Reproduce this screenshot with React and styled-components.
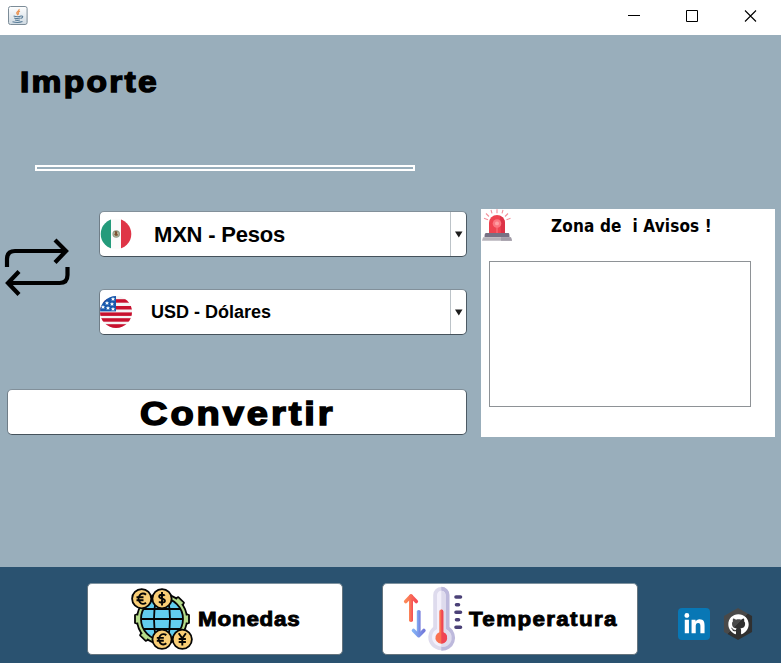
import React from "react";
import styled, { createGlobalStyle } from "styled-components";
import { FaGithub, FaLinkedinIn } from "react-icons/fa";

const GlobalStyle = createGlobalStyle`
  * { box-sizing: border-box; }
  body { margin: 0; overflow: hidden; }
  svg { display: block; flex: none; }
  button { padding: 0; border: 0; font: inherit; color: inherit; text-align: left; }
`;

const Window = styled.div`
  width: 781px;
  height: 663px;
  display: flex;
  flex-direction: column;
  background: #99aebb;
  color: #000;
  font-family: "Liberation Sans", Arial, sans-serif;
`;

const TitleBar = styled.header`
  height: 35px;
  flex: none;
  display: flex;
  justify-content: space-between;
  padding: 6px 24px 0 8px;
  background: #fff;
`;

const WindowControls = styled.div`
  display: flex;
  gap: 46px;
  padding-top: 4px;
`;

const Heavy = styled.span`
  display: block;
  font-weight: 700;
  font-size: ${(p) => p.$size}px;
  letter-spacing: ${(p) => p.$spacing}px;
  line-height: 1;
  white-space: nowrap;
  -webkit-text-stroke: 0.045em #000;
  transform: scaleX(1.12);
  transform-origin: left;
`;

const Amount = styled.section`
  height: 136px;
  flex: none;
  padding: 32px 0 0 20px;
`;

const AmountTitle = styled.h1`
  margin: 0;
  height: 98px;
  display: flex;
  align-items: flex-start;
`;

const AmountField = styled.input`
  display: block;
  width: 380px;
  height: 6px;
  margin-left: 15px;
  padding: 0;
  border: 2px solid #fff;
  background: transparent;
  outline: none;
`;

const Main = styled.main`
  flex: 1;
  display: grid;
  grid-template-columns: 460px 294px;
  column-gap: 14px;
  padding: 38px 6px 0 7px;
`;

const Converter = styled.div`
  padding-top: 2px;
`;

const Currencies = styled.div`
  display: flex;
  height: 178px;
`;

const SwapButton = styled.button`
  width: 92px;
  height: 60px;
  margin-top: 26px;
  background: none;
`;

const SwapIcon = styled.svg`
  margin-left: -3px;
`;

const Selects = styled.div`
  display: flex;
  flex-direction: column;
  gap: 32px;
`;

const Raised = styled.button`
  background: #fff;
  border: 1px solid;
  border-color: #82909a #4c5a64 #45525b #6f7d87;
  border-radius: 5px;
`;

const Select = styled(Raised)`
  width: 368px;
  height: 46px;
  display: flex;
  align-items: center;
`;

const Label = styled.span`
  flex: 1;
  font-size: ${(p) => p.$size}px;
  font-weight: 700;
  padding-top: ${(p) => p.$drop}px;
  padding-left: ${(p) => p.$inset}px;
  letter-spacing: ${(p) => p.$spacing}px;
`;

const Arrow = styled.span`
  width: 16px;
  height: 44px;
  display: flex;
  align-items: center;
  justify-content: center;
  border-left: 1px solid #bcc3c8;
`;

const ConvertButton = styled(Raised)`
  width: 460px;
  height: 46px;
  display: flex;
  align-items: center;
  padding: 2px 0 0 132px;
`;

const Notices = styled.aside`
  height: 228px;
  padding-left: 8px;
  background: #fff;
`;

const NoticesHeader = styled.div`
  height: 52px;
  display: flex;
`;

const SirenIcon = styled.svg`
  margin-left: -8px;
`;

const NoticesTitle = styled.h2`
  margin: 6px 0 0 38px;
  font: 700 17px/22px "DejaVu Sans Condensed", "DejaVu Sans", sans-serif;
  font-stretch: condensed;
  letter-spacing: ${(p) => p.$spacing}px;
  white-space: pre;
`;

const NoticesBox = styled.div`
  width: 262px;
  height: 146px;
  border: 1px solid #8e9296;
`;

const Footer = styled.footer`
  height: 96px;
  flex: none;
  display: flex;
  align-items: flex-start;
  padding: 16px 0 0 87px;
  background: #2a5270;
`;

const ModeButton = styled(Raised)`
  width: 256px;
  height: 72px;
  display: flex;
  align-items: center;
  margin-right: ${(p) => p.$gap}px;
  padding-left: ${(p) => p.$inset}px;
  gap: ${(p) => p.$space}px;
  border-color: #7e929f #65747e #65747e #65747e;
`;

const Social = styled.a`
  width: 32px;
  height: 32px;
  margin-top: 25px;
  display: grid;
  place-items: center;
  color: #fff;
  background: ${(p) => p.$bg};
  border-radius: ${(p) => (p.$hex ? 0 : 4)}px;
  margin-left: ${(p) => (p.$hex ? 12 : 0)}px;
  clip-path: ${(p) => (p.$hex ? "polygon(50% 0, 94% 25%, 94% 75%, 50% 100%, 6% 75%, 6% 25%)" : "none")};
`;

function JavaIcon() {
  return (
    <svg width="20" height="20" viewBox="0 0 20 20" fill="none">
      <defs>
        <linearGradient id="tile" x1="0" y1="0" x2="0" y2="1">
          <stop offset="0" stopColor="#fff" />
          <stop offset="1" stopColor="#cfdae2" />
        </linearGradient>
      </defs>
      <rect x=".5" y=".5" width="18.6" height="18" rx="2" fill="url(#tile)" stroke="#7c8c98" />
      <path d="M10.8 3.2c1.5 1.6-3 2.4-2 4.2l1.2 1.8M12 5.3c-2.2.8-2.2 1.6-1.2 3" stroke="#ea9250" strokeWidth="1.2" />
      <path d="M5.6 10q4 1.3 7.5.1M6.2 12q3.2 1 6 .1M7 14q2.3.7 4.8 0M4.5 15.7q5.2 1.5 10-.1M13 10c2.7-.4 2 1.8-.4 2.4" stroke="#567a96" strokeWidth="1.1" />
    </svg>
  );
}

function MexicoFlag() {
  return (
    <svg width="32" height="32" viewBox="0 0 32 32">
      <clipPath id="mx"><circle cx="16" cy="16" r="15.3" /></clipPath>
      <g clipPath="url(#mx)">
        <rect width="11" height="32" fill="#249b7b" />
        <rect x="11" width="10" height="32" fill="#fbfbfb" />
        <rect x="21" width="11" height="32" fill="#df3547" />
      </g>
      <circle cx="16.2" cy="16" r="3.2" fill="#b9b59c" stroke="#93a08c" strokeWidth="1.2" />
      <path d="M14.6 13l2.8.4-.4 2.2 1.2 1.6-2.4.8-1.6-1.4 1-1.6z" fill="#79502f" />
    </svg>
  );
}

const STARS = [[13, 3], [7, 7], [12, 8], [3, 11], [8, 12], [13, 13]];

function UsaFlag() {
  return (
    <svg width="32" height="32" viewBox="0 0 32 32">
      <clipPath id="us"><circle cx="16" cy="16" r="16" /></clipPath>
      <g clipPath="url(#us)">
        <rect width="32" height="32" fill="#f5f3f4" />
        {[3.2, 10, 16.4, 22.2, 28.2].map((y) => (
          <rect key={y} y={y} width="32" height={y > 27 ? 4 : 3.5} fill="#c8102e" />
        ))}
        <rect width="16" height="15.4" fill="#1858ad" />
        {STARS.map(([x, y]) => (
          <path key={`${x}-${y}`} transform={`translate(${x} ${y})`} fill="#fff"
            d="M0-2l.6 1.3 1.4.1L1 .4l.4 1.5L0 1.1l-1.4.8.4-1.5-1-1 1.4-.1z" />
        ))}
      </g>
    </svg>
  );
}

function Siren() {
  return (
    <SirenIcon width="32" height="34" viewBox="0 0 32 34">
      <path d="M16 .3v4M10 1l1 3.4M5 4.5l3 3M3 9.3l4 1.5M22 1l-1 3.4M27 4.5l-3 3M29.5 9.3l-4 1.5" stroke="#f3909b" strokeWidth="1.1" />
      <path d="M8 25V14a8 8 0 0 1 16 0v11z" fill="#ef4350" />
      <path d="M19 7a8 8 0 0 1 5 7v11h-4z" fill="#dc3347" />
      <circle cx="16" cy="14.5" r="4.3" fill="#fb7680" />
      <circle cx="16" cy="14.5" r="2" fill="#ffa0a3" />
      <path d="M16 16v9" stroke="#fb7680" />
      <path d="M5 24h22.5q1 0 1 4.2H3.5Q3.5 24 5 24z" fill="#777184" />
      <path d="M2 28.2h28l1 3.6H1z" fill="#b7b3bb" />
      <path d="M20 28.2h10l1 3.6H20z" fill="#a29da8" />
    </SirenIcon>
  );
}

const TEETH = [0, 45, 90, 135, 180, 225, 270, 315];

function MoneyGlobe() {
  return (
    <svg width="64" height="64" viewBox="0 0 64 64" stroke="#050505" strokeWidth="1.8">
      <g fill="#b5dc8a" strokeLinejoin="round">
        {TEETH.map((angle) => (
          <path key={angle} d="M56 27l3 1v8l-3 1z" transform={`rotate(${angle} 32 32)`} />
        ))}
        <circle cx="32" cy="32" r="25" />
        {TEETH.map((angle) => (
          <path key={angle} d="M55 28.500h3v7h-3z" stroke="none" transform={`rotate(${angle} 32 32)`} />
        ))}
      </g>
      <circle cx="32" cy="32" r="21" fill="#62cdef" />
      <path fill="none" d="M13 22h38M11 32h42M13 42h38M26 12q-4 20 0 40M38 12q4 20 0 40" />
      <g fill="#f9ce76">
        <circle cx="11.700" cy="11.700" r="9.600" />
        <circle cx="32" cy="11.700" r="9.600" />
        <circle cx="32" cy="52.300" r="9.600" />
        <circle cx="52.300" cy="52.300" r="9.600" />
      </g>
      <g fill="none" strokeWidth="1.900">
        <path d="M16 7.700a4.500 5.200 0 1 0 0 8M6.500 10.300h7M6.500 13.200h7" />
        <path d="M36.300 48.300a4.500 5.200 0 1 0 0 8M26.800 50.900h7M26.800 53.800h7" />
        <path d="M34.700 8.800c-1-1.500-5.500-1.500-5.500.8 0 2.800 5.700 1.500 5.700 4.200 0 2.400-4.700 2.400-5.800.6M32 5v13.500" />
        <path d="M48.700 46.300l3.600 5 3.600-5M52.300 51v7.500M48.700 52h7.200M48.700 55h7.200" />
      </g>
    </svg>
  );
}

function Thermometer() {
  return (
    <svg width="60" height="67" viewBox="0 0 60 67" fill="none" strokeLinecap="round" strokeLinejoin="round">
      <defs>
        <linearGradient id="warm"><stop stopColor="#fc8857" /><stop offset="1" stopColor="#f54c56" /></linearGradient>
        <linearGradient id="cold"><stop stopColor="#83b1f5" /><stop offset="1" stopColor="#7379da" /></linearGradient>
      </defs>
      <g transform="translate(0 -1)">
        <path d="M30.2 42V10a8.1 8.1 0 0 1 16.2 0v32a13 13 0 1 1-16.2 0z" fill="#dedbed" />
        <path d="M38.3 1.8a8.1 8.1 0 0 1 8.1 8.2v32a13 13 0 0 1-8.1 23.7z" fill="#bdb9dc" />
        <path d="M34 44V10a4.3 4.3 0 0 1 8.6 0v34a9.3 9.3 0 1 1-8.6 0z" fill="#f3f0fb" />
        <path d="M38.3 5.7a4.3 4.3 0 0 1 4.3 4.3v34a9.3 9.3 0 0 1-4.3 18z" fill="#dedbed" />
        <path d="M36.3 26.5a2 2 0 0 1 4 0v20.7a5.9 5.9 0 1 1-4 0z" fill="#fa7050" />
        <path d="M38.3 24.5a2 2 0 0 1 2 2v20.7a5.9 5.9 0 0 1-2 11.4z" fill="#ef4454" />
      </g>
      <path d="M6 9L8 8.5l2 .5v26q-2 2-4 0z" fill="url(#warm)" />
      <path d="M2.7 15.5L8 10l5.3 5.5" stroke="url(#warm)" strokeWidth="3.6" />
      <path d="M13.8 25q1.900-2 3.800 0v24h-3.8z" fill="url(#cold)" />
      <path d="M10.5 44.500l5.200 5.200 5.200-5.200" stroke="url(#cold)" strokeWidth="3.6" />
      <path d="M53 11h4.5M53.5 18.7h2M53 26.3h4.5M53.5 33.7h2M53 41.3h4.5" stroke="#4b4177" strokeWidth="3.6" />
    </svg>
  );
}

function CurrencySelect({ flag, children, ...label }) {
  return (
    <Select type="button">
      {flag}
      <Label {...label}>{children}</Label>
      <Arrow>
        <svg width="8" height="7" viewBox="0 0 8 7"><path d="M0 .5h7.500L3.800 6.500z" fill="#1d1d1d" /></svg>
      </Arrow>
    </Select>
  );
}

export default function App() {
  return (
    <>
      <GlobalStyle />
      <Window>
        <TitleBar>
          <JavaIcon />
          <WindowControls>
            <svg width="12" height="12"><path d="M0 5.5h12" stroke="#000" /></svg>
            <svg width="12" height="12"><path d="M.5.5h11v11H.5z" stroke="#000" fill="none" /></svg>
            <svg width="13" height="13"><path d="M1 .5l11 11M12 .5l-11 11" stroke="#000" strokeWidth="1.1" /></svg>
          </WindowControls>
        </TitleBar>
        <Amount>
          <AmountTitle><Heavy $size={30} $spacing={2}>Importe</Heavy></AmountTitle>
          <AmountField aria-label="Importe" />
        </Amount>
        <Main>
          <Converter>
            <Currencies>
              <SwapButton type="button" aria-label="Intercambiar">
                <SwapIcon width="66" height="60" viewBox="0 0 66 60" fill="none" stroke="#000" strokeWidth="4.2">
                  <path d="M3 30v-8q0-8 8-8h51M51 3L62 14 51 25.500M63.500 30v8q0 8-8 8H5M15 34.500L4 46 15 57.500" />
                </SwapIcon>
              </SwapButton>
              <Selects>
                <CurrencySelect flag={<MexicoFlag />} $size={22} $inset={22} $drop={1} $spacing={-0.2}>MXN - Pesos</CurrencySelect>
                <CurrencySelect flag={<UsaFlag />} $size={18} $inset={19} $drop={0} $spacing={0}>USD - Dólares</CurrencySelect>
              </Selects>
            </Currencies>
            <ConvertButton type="button"><Heavy $size={34} $spacing={2.6}>Convertir</Heavy></ConvertButton>
          </Converter>
          <Notices>
            <NoticesHeader>
              <Siren />
              <NoticesTitle $spacing={0.15}>{"Zona de  i Avisos !"}</NoticesTitle>
            </NoticesHeader>
            <NoticesBox />
          </Notices>
        </Main>
        <Footer>
          <ModeButton type="button" $inset={42} $space={4} $gap={39}>
            <MoneyGlobe />
            <Heavy $size={20} $spacing={0.7}>Monedas</Heavy>
          </ModeButton>
          <ModeButton type="button" $inset={20} $space={6} $gap={40}>
            <Thermometer />
            <Heavy $size={20} $spacing={1.2}>Temperatura</Heavy>
          </ModeButton>
          <Social $bg="#0877b5" aria-label="LinkedIn"><FaLinkedinIn size={23} /></Social>
          <Social $bg="linear-gradient(135deg, #494949 50%, #303030 50%)" $hex aria-label="GitHub"><FaGithub size={21} /></Social>
        </Footer>
      </Window>
    </>
  );
}
